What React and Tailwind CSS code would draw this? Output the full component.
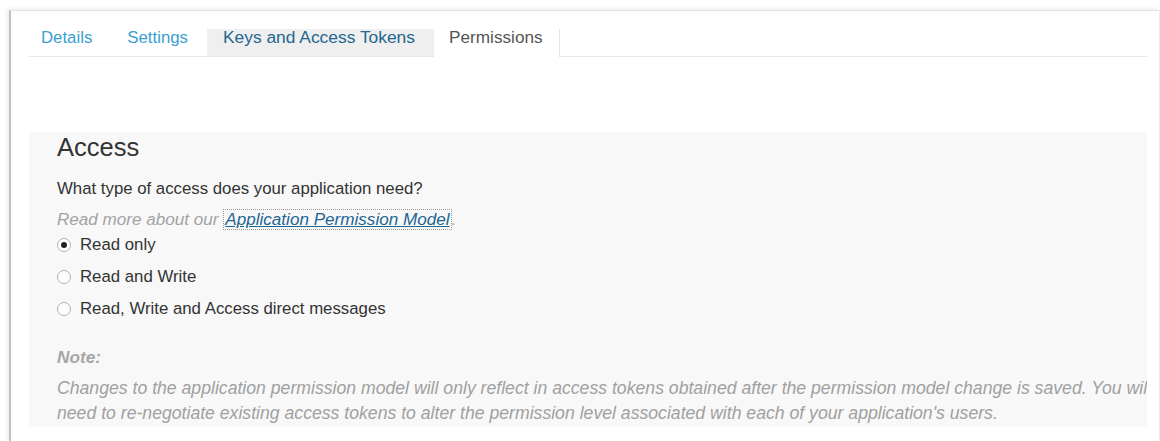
import React from "react";

const tabs = [
  { label: "Details", cls: "pl-[12px] pr-[17px] text-[#3aa0d0]" },
  { label: "Settings", cls: "pl-[18px] pr-[19px] text-[#3aa0d0]" },
  { label: "Keys and Access Tokens", cls: "pl-[16px] pr-[19px] bg-[#efefef] text-[#23668f] text-[17.4px]" },
];

function Radio({ checked, label }) {
  return (
    <label className="flex h-[26px] items-center">
      <span className="flex h-[14px] w-[14px] items-center justify-center rounded-full border border-[#b0b0b0] bg-white">
        {checked && <span className="h-[6px] w-[6px] rounded-full bg-[#222]" />}
      </span>
      <span className="ml-[9px] text-[#333]">{label}</span>
    </label>
  );
}

export default function App() {
  return (
    <div
      className="h-[441px] w-[1160px] overflow-hidden bg-white pl-[9px] pt-[10px]"
      style={{ fontFamily: '"Liberation Sans", Arial, sans-serif' }}
    >
      <div className="h-[460px] border-l-2 border-r border-t border-l-[#c2c2c2] border-r-[#ececec] border-t-[#e4e4e4] bg-white pl-[18px] pr-[12px] pt-[18px] shadow-[-2px_-1px_4px_rgba(0,0,0,0.08)]">
        {/* tab strip */}
        <div className="flex h-[28px] text-[16.8px] leading-[17px]">
          {tabs.map((t) => (
            <div key={t.label} className={`h-[28px] border-b border-[#e6e6e6] ${t.cls}`}>
              {t.label}
            </div>
          ))}
          <div className="h-[28px] border-r border-[#e4e4e4] pl-[15px] pr-[16px] text-[17.2px] text-[#555]">
            Permissions
          </div>
          <div className="h-[28px] flex-1 border-b border-[#e6e6e6]" />
        </div>

        {/* access panel */}
        <div className="mt-[75px] h-[295px] overflow-hidden bg-[#f8f8f8] pl-[28px] text-[16.8px]">
          <h2 className="text-[25.5px] leading-[30px] text-[#333]">Access</h2>
          <p className="mt-[15px] leading-[24px] text-[#333]">
            What type of access does your application need?
          </p>
          <p className="mt-[7px] text-[17.1px] leading-[24px] italic text-[#a3a3a3]">
            Read more about our{" "}
            <a className="border border-dotted border-[#9a9a9a] px-[1px] text-[#1e6593] underline">
              Application Permission Model
            </a>
            .
          </p>
          <div className="flex flex-col gap-[6px]">
            <Radio checked label="Read only" />
            <Radio label="Read and Write" />
            <Radio label="Read, Write and Access direct messages" />
          </div>
          <p className="mt-[23px] text-[17.2px] font-bold italic leading-[24px] text-[#a6a6a6]">Note:</p>
          <p className="mt-[7px] whitespace-nowrap text-[17.65px] italic leading-[25px] text-[#a0a0a0]">
            Changes to the application permission model will only reflect in access tokens obtained after the permission model change is saved. You will
            <br />
            need to re-negotiate existing access tokens to alter the permission level associated with each of your application's users.
          </p>
        </div>
      </div>
    </div>
  );
}
